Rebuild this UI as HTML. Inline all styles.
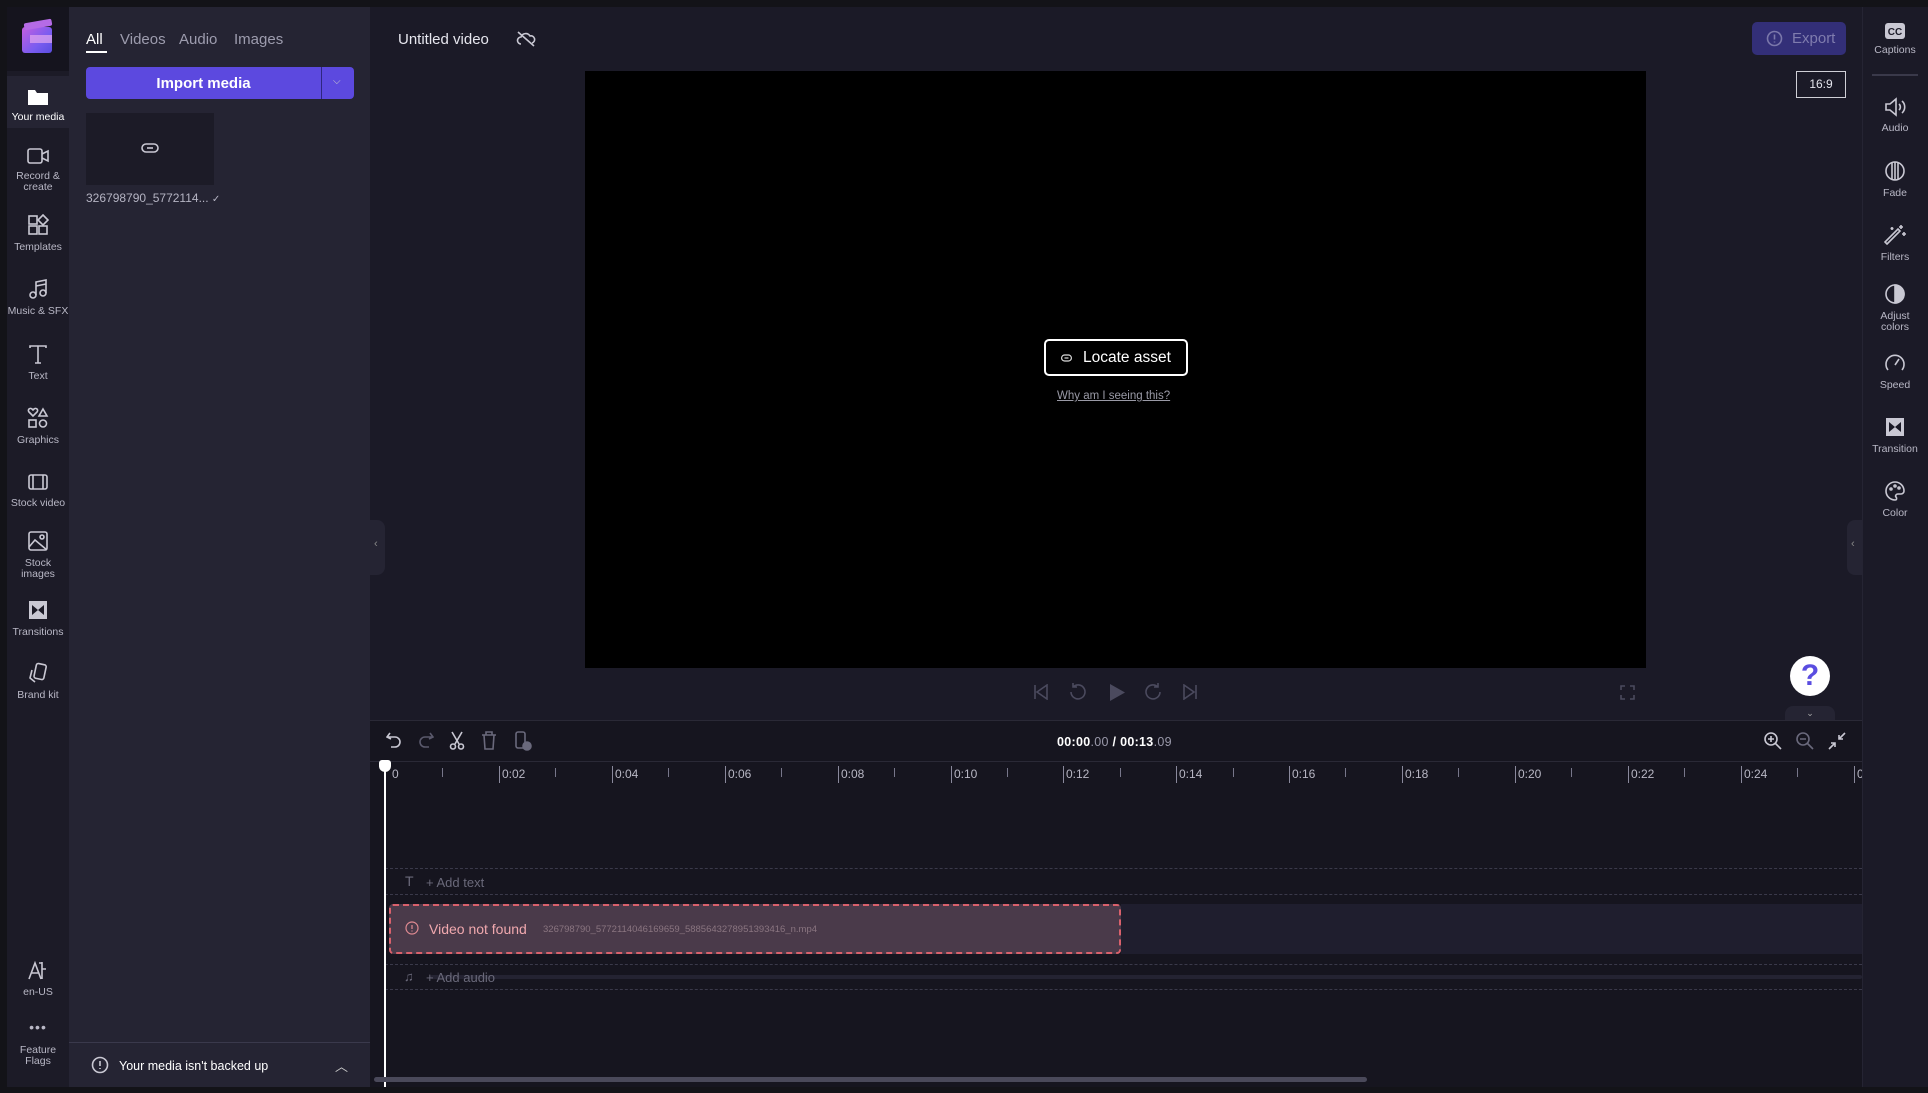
<!DOCTYPE html>
<html><head><meta charset="utf-8"><style>
*{margin:0;padding:0;box-sizing:border-box}
body{width:1928px;height:1093px;background:#131318;font-family:"Liberation Sans",sans-serif;position:relative;overflow:hidden;color:#e6e6ee}
.a{position:absolute}
.nav{position:absolute;left:7px;width:62px;text-align:center;font-size:10.5px;color:#b9b8c6;line-height:11px}
.nav svg{display:block;margin:0 auto 6px}
.rp{position:absolute;left:1862px;width:66px;text-align:center;font-size:10.5px;color:#b9b8c6;line-height:11px}
.rp svg{display:block;margin:0 auto 6px}
svg{fill:none;stroke:#c9c8d3;stroke-width:1.6}
.dim{stroke:#4b4a5e}
.dim2{stroke:#6a697c}
.tick{position:absolute;top:768px;width:1px;height:9px;background:#77768a}
.big{position:absolute;top:766px;width:1px;height:17px;background:#8a899c}
.lab{position:absolute;top:767px;font-size:12px;color:#b8b7c4}
</style></head><body>
<!-- nav -->
<div class="a" style="left:7px;top:7px;width:62px;height:1080px;background:#1c1b27"></div>
<div class="a" style="left:7px;top:7px;width:62px;height:64px;background:#15141e"></div>
<div class="a" style="left:20px;top:21px;width:34px;height:36px">
<div class="a" style="left:2px;top:6px;width:30px;height:26px;border-radius:3px;background:linear-gradient(135deg,#c55ee0,#7a5cf0 60%,#5a4de0)"></div>
<div class="a" style="left:4px;top:0px;width:28px;height:7px;border-radius:2px;background:#b56be6;transform:rotate(-10deg)"></div>
<div class="a" style="left:10px;top:14px;width:22px;height:8px;background:#e2a6f0;opacity:.7"></div>
</div>
<div class="a" style="left:7px;top:76px;width:62px;height:52px;background:#252433"></div>
<div class="nav" style="top:88px;color:#fff"><svg width="22" height="18" viewBox="0 0 22 18" style="stroke:none;fill:#fff"><path d="M1 2h7l2 3h11v12H1z"/></svg>Your media</div>
<div class="nav" style="top:147px"><svg width="24" height="18" viewBox="0 0 24 18"><rect x="2" y="2" width="14" height="14" rx="2"/><path d="M16 7l6-3v10l-6-3"/></svg>Record &amp;<br>create</div>
<div class="nav" style="top:214px"><svg width="22" height="22" viewBox="0 0 22 22"><rect x="2" y="12" width="8" height="8"/><rect x="12" y="12" width="8" height="8"/><rect x="2" y="2" width="8" height="8"/><path d="M16 1l5 5-5 5-5-5z"/></svg>Templates</div>
<div class="nav" style="top:278px"><svg width="22" height="22" viewBox="0 0 22 22"><circle cx="6" cy="17" r="3"/><circle cx="16" cy="15" r="3"/><path d="M9 17V4l10-2v13M9 8l10-2"/></svg>Music &amp; SFX</div>
<div class="nav" style="top:343px"><svg width="22" height="22" viewBox="0 0 22 22"><path d="M3 5V3h16v2M11 3v17M8 20h6"/></svg>Text</div>
<div class="nav" style="top:407px"><svg width="22" height="22" viewBox="0 0 22 22"><path d="M6 9L2 5a2 2 0 013-3l1 1 1-1a2 2 0 013 3z"/><path d="M16 2l4 7h-8z"/><rect x="2" y="13" width="7" height="7"/><circle cx="16" cy="16.5" r="3.5"/></svg>Graphics</div>
<div class="nav" style="top:472px"><svg width="22" height="20" viewBox="0 0 22 20"><rect x="2" y="3" width="18" height="14" rx="2"/><path d="M6 3v14M16 3v14"/></svg>Stock video</div>
<div class="nav" style="top:530px"><svg width="22" height="22" viewBox="0 0 22 22"><rect x="2" y="2" width="18" height="18" rx="2"/><path d="M2 17l6-7 12 10"/><circle cx="15" cy="7" r="2"/></svg>Stock<br>images</div>
<div class="nav" style="top:599px"><svg width="22" height="22" viewBox="0 0 22 22" style="stroke:none;fill:#c9c8d3"><path d="M2 2h18v18H2z"/><path d="M5 6l6 5-6 5zM17 6l-6 5 6 5z" fill="#1c1b27"/></svg>Transitions</div>
<div class="nav" style="top:662px"><svg width="22" height="22" viewBox="0 0 22 22"><rect x="8" y="2" width="10" height="15" rx="2" transform="rotate(12 13 10)"/><path d="M5 8l-2 8 5 4"/></svg>Brand kit</div>
<div class="nav" style="top:959px"><svg width="22" height="22" viewBox="0 0 22 22"><path d="M2 20L8 4l6 16M4 14h8M15 3v17M15 10h4M12 4h3"/></svg>en-US</div>
<div class="nav" style="top:1022px;font-size:14px;letter-spacing:1px;line-height:10px">•••</div>
<div class="nav" style="top:1045px">Feature<br>Flags</div>
<!-- media panel -->
<div class="a" style="left:69px;top:7px;width:301px;height:1080px;background:#252433"></div>
<div class="a" style="left:86px;top:31px;font-size:15px;color:#fff">All</div>
<div class="a" style="left:86px;top:51px;width:21px;height:2px;background:#fff"></div>
<div class="a" style="left:120px;top:31px;font-size:15px;color:#9d9cae">Videos</div>
<div class="a" style="left:179px;top:31px;font-size:15px;color:#9d9cae">Audio</div>
<div class="a" style="left:234px;top:31px;font-size:15px;color:#9d9cae">Images</div>
<div class="a" style="left:86px;top:67px;width:268px;height:32px;border-radius:4px;background:#5c49df"></div>
<div class="a" style="left:86px;top:68px;width:235px;height:32px;line-height:32px;text-align:center;font-size:15px;font-weight:bold;color:#fff">Import media</div>
<div class="a" style="left:321px;top:67px;width:1px;height:32px;background:#2e2680"></div>
<div class="a" style="left:333px;top:76px;font-size:10px;color:#ccc">⌵</div>
<div class="a" style="left:86px;top:113px;width:128px;height:72px;background:#1c1b27"></div>
<svg class="a" style="left:141px;top:142px" width="18" height="12" viewBox="0 0 18 12"><rect x="1" y="2" width="16" height="8" rx="4"/><path d="M6 6h6"/></svg>
<div class="a" style="left:86px;top:191px;font-size:12px;color:#b5b4c3">326798790_5772114... <span style="font-size:10px">✓</span></div>
<div class="a" style="left:69px;top:1042px;width:301px;height:1px;background:#3a394c"></div>
<svg class="a" style="left:91px;top:1056px" width="18" height="18" viewBox="0 0 18 18"><circle cx="9" cy="9" r="7.5"/><path d="M9 5v5M9 12v1"/></svg>
<div class="a" style="left:119px;top:1059px;font-size:12.5px;color:#fff">Your media isn't backed up</div>
<div class="a" style="left:335px;top:1056px;font-size:13px;color:#ccc">︿</div>
<!-- main -->
<div class="a" style="left:370px;top:7px;width:1492px;height:713px;background:#1b1a27"></div>
<div class="a" style="left:398px;top:31px;font-size:15px;color:#e6e6ee">Untitled video</div>
<svg class="a" style="left:516px;top:31px" width="20" height="16" viewBox="0 0 20 16"><path d="M5 13a3.5 3.5 0 010-7 5 5 0 019-1 3.5 3.5 0 012 7M2 1l16 14"/></svg>
<div class="a" style="left:1752px;top:22px;width:94px;height:33px;border-radius:5px;background:#332f78"></div>
<svg class="a" style="left:1766px;top:30px;stroke:#7a77aa" width="17" height="17" viewBox="0 0 17 17"><circle cx="8.5" cy="8.5" r="7"/><path d="M8.5 4.5v5M8.5 11.5v1"/></svg>
<div class="a" style="left:1792px;top:30px;font-size:15px;color:#7f7cae">Export</div>
<div class="a" style="left:1796px;top:71px;width:50px;height:27px;border:1px solid #cfcfd6;font-size:12px;line-height:25px;text-align:center;color:#e6e6ee">16:9</div>
<div class="a" style="left:585px;top:71px;width:1061px;height:597px;background:#000"></div>
<div class="a" style="left:1044px;top:339px;width:144px;height:37px;border:2px solid #fff;border-radius:5px;background:#000"></div>
<svg class="a" style="left:1061px;top:354px;stroke:#ddd;stroke-width:1.2" width="11" height="8" viewBox="0 0 11 8"><rect x=".6" y="1" width="9.8" height="6" rx="3"/><path d="M3.5 4h4"/></svg>
<div class="a" style="left:1083px;top:349px;font-size:15.5px;color:#fff">Locate asset</div>
<div class="a" style="left:1057px;top:390px;font-size:11.5px;color:#9a9aa6;text-decoration:underline">Why am I seeing this?</div>
<!-- playback -->
<svg class="a dim" style="left:1033px;top:684px" width="16" height="16" viewBox="0 0 16 16"><path d="M2 1v14M14 1L4 8l10 7z"/></svg>
<svg class="a dim" style="left:1068px;top:682px" width="20" height="20" viewBox="0 0 20 20"><path d="M5 5a7 7 0 11-2 5M5 1v4h4"/></svg>
<svg class="a" style="left:1108px;top:683px;stroke:none;fill:#4b4a5e" width="18" height="19" viewBox="0 0 18 19"><path d="M2 1l15 8.5L2 18z"/></svg>
<svg class="a dim" style="left:1143px;top:682px" width="20" height="20" viewBox="0 0 20 20"><path d="M15 5a7 7 0 102 5M15 1v4h-4"/></svg>
<svg class="a dim" style="left:1182px;top:684px" width="16" height="16" viewBox="0 0 16 16"><path d="M14 1v14M2 1l10 7-10 7z"/></svg>
<svg class="a dim" style="left:1620px;top:685px" width="15" height="15" viewBox="0 0 15 15"><path d="M1 5V1h4M10 1h4v4M14 10v4h-4M5 14H1v-4"/></svg>
<div class="a" style="left:1790px;top:656px;width:40px;height:40px;border-radius:50%;background:#fff;text-align:center;font-size:30px;font-weight:bold;line-height:40px;color:#5a4de0">?</div>
<div class="a" style="left:1785px;top:706px;width:50px;height:14px;border-radius:8px 8px 0 0;background:#252433;text-align:center;font-size:9px;color:#aaa;line-height:14px">⌄</div>
<div class="a" style="left:370px;top:520px;width:15px;height:55px;border-radius:0 8px 8px 0;background:#252433"></div>
<div class="a" style="left:374px;top:538px;font-size:11px;color:#888">‹</div>
<div class="a" style="left:1847px;top:520px;width:15px;height:55px;border-radius:8px 0 0 8px;background:#252433"></div>
<div class="a" style="left:1851px;top:538px;font-size:11px;color:#888">‹</div>
<!-- timeline -->
<div class="a" style="left:370px;top:720px;width:1492px;height:367px;background:#16151f"></div>
<div class="a" style="left:370px;top:720px;width:1492px;height:1px;background:#2a2936"></div>
<div class="a" style="left:370px;top:761px;width:1492px;height:1px;background:#2a2936"></div>
<svg class="a" style="left:386px;top:732px" width="16" height="17" viewBox="0 0 16 17"><path d="M4 1L1 5l4 2M1 5h8a5 5 0 010 10H5"/></svg>
<svg class="a" style="left:418px;top:732px;stroke:#5a596c" width="16" height="17" viewBox="0 0 16 17"><path d="M12 1l3 4-4 2M15 5H7a5 5 0 000 10h4"/></svg>
<svg class="a" style="left:449px;top:731px" width="16" height="19" viewBox="0 0 16 19"><path d="M3 1l7 12M13 1L6 13"/><circle cx="4" cy="15.5" r="2.5"/><circle cx="12" cy="15.5" r="2.5"/></svg>
<svg class="a dim2" style="left:481px;top:731px" width="16" height="19" viewBox="0 0 16 19"><path d="M1 4h14M5 4V1h6v3M3 4l1 14h8l1-14"/></svg>
<svg class="a dim2" style="left:514px;top:731px" width="18" height="20" viewBox="0 0 18 20"><rect x="2" y="1" width="9" height="16" rx="2"/><circle cx="13" cy="15" r="4" fill="#6a697c"/></svg>
<div class="a" style="left:1057px;top:735px;font-size:12.5px;font-weight:bold;color:#fff;letter-spacing:.3px">00:00<span style="color:#9a99aa;font-weight:normal">.00</span> / 00:13<span style="color:#9a99aa;font-weight:normal">.09</span></div>
<svg class="a" style="left:1764px;top:732px" width="18" height="18" viewBox="0 0 18 18"><circle cx="7" cy="7" r="6"/><path d="M11 11l6 6M4 7h6M7 4v6"/></svg>
<svg class="a dim2" style="left:1796px;top:732px" width="18" height="18" viewBox="0 0 18 18"><circle cx="7" cy="7" r="6"/><path d="M11 11l6 6M4 7h6"/></svg>
<svg class="a" style="left:1828px;top:732px" width="18" height="18" viewBox="0 0 18 18"><path d="M1 17l6-6M3 11h4v4M17 1l-6 6M11 3v4h4"/></svg>
<!-- ruler -->
<div class="lab" style="left:392px">0</div>
<div class="tick" style="left:442px"></div>
<div class="big" style="left:499px"></div><div class="lab" style="left:502px">0:02</div><div class="tick" style="left:555px"></div>
<div class="big" style="left:612px"></div><div class="lab" style="left:615px">0:04</div><div class="tick" style="left:668px"></div>
<div class="big" style="left:725px"></div><div class="lab" style="left:728px">0:06</div><div class="tick" style="left:781px"></div>
<div class="big" style="left:838px"></div><div class="lab" style="left:841px">0:08</div><div class="tick" style="left:894px"></div>
<div class="big" style="left:951px"></div><div class="lab" style="left:954px">0:10</div><div class="tick" style="left:1007px"></div>
<div class="big" style="left:1063px"></div><div class="lab" style="left:1066px">0:12</div><div class="tick" style="left:1120px"></div>
<div class="big" style="left:1176px"></div><div class="lab" style="left:1179px">0:14</div><div class="tick" style="left:1233px"></div>
<div class="big" style="left:1289px"></div><div class="lab" style="left:1292px">0:16</div><div class="tick" style="left:1345px"></div>
<div class="big" style="left:1402px"></div><div class="lab" style="left:1405px">0:18</div><div class="tick" style="left:1458px"></div>
<div class="big" style="left:1515px"></div><div class="lab" style="left:1518px">0:20</div><div class="tick" style="left:1571px"></div>
<div class="big" style="left:1628px"></div><div class="lab" style="left:1631px">0:22</div><div class="tick" style="left:1684px"></div>
<div class="big" style="left:1741px"></div><div class="lab" style="left:1744px">0:24</div><div class="tick" style="left:1797px"></div>
<div class="big" style="left:1854px"></div><div class="lab" style="left:1857px">0</div>
<!-- tracks -->
<div class="a" style="left:385px;top:868px;width:1477px;height:0;border-top:1px dashed #3a394a"></div>
<div class="a" style="left:385px;top:894px;width:1477px;height:0;border-top:1px dashed #3a394a"></div>
<div class="a" style="left:405px;top:873px;font-size:14px;color:#6a697a">T</div>
<div class="a" style="left:426px;top:875px;font-size:13px;color:#6a697a">+ Add text</div>
<div class="a" style="left:1121px;top:904px;width:741px;height:50px;background:#1f1e2e"></div>
<div class="a" style="left:389px;top:904px;width:732px;height:50px;border:2px dashed #d9616c;border-radius:4px;background:#4a3a4a"></div>
<svg class="a" style="left:405px;top:921px;stroke:#e08a92;stroke-width:1.2" width="14" height="14" viewBox="0 0 14 14"><circle cx="7" cy="7" r="6"/><path d="M7 4v4M7 9.5v1"/></svg>
<div class="a" style="left:429px;top:921px;font-size:14px;color:#f0a8ae">Video not found</div>
<div class="a" style="left:543px;top:924px;font-size:9.5px;color:#8a7580">326798790_5772114046169659_5885643278951393416_n.mp4</div>
<div class="a" style="left:385px;top:964px;width:1477px;height:0;border-top:1px dashed #3a394a"></div>
<div class="a" style="left:385px;top:989px;width:1477px;height:0;border-top:1px dashed #3a394a"></div>
<div class="a" style="left:430px;top:975px;width:1432px;height:4px;background:#242332;border-radius:2px"></div>
<div class="a" style="left:404px;top:969px;font-size:13px;color:#6a697a">♫</div>
<div class="a" style="left:426px;top:970px;font-size:13px;color:#6a697a">+ Add audio</div>
<div class="a" style="left:384px;top:768px;width:2px;height:319px;background:#fff"></div>
<div class="a" style="left:379px;top:760px;width:12px;height:12px;border-radius:3px 3px 6px 6px;background:#fff"></div>
<div class="a" style="left:374px;top:1077px;width:993px;height:5px;border-radius:3px;background:#4a495a"></div>
<!-- right panel -->
<div class="a" style="left:1862px;top:7px;width:66px;height:1080px;background:#1b1a27;border-left:1px solid #252433"></div>
<div class="rp" style="top:23px"><svg width="20" height="16" viewBox="0 0 20 16" style="stroke:none;fill:#c9c8d3"><rect width="20" height="16" rx="3"/><text x="10" y="12" font-size="10" font-weight="bold" text-anchor="middle" fill="#1b1a27" font-family="Liberation Sans">CC</text></svg>Captions</div>
<div class="a" style="left:1872px;top:74px;width:46px;height:2px;background:#3a394a"></div>
<div class="rp" style="top:97px"><svg width="22" height="20" viewBox="0 0 22 20"><path d="M2 7h4l6-5v16l-6-5H2z"/><path d="M15 7a4 4 0 010 6M18 4a8 8 0 010 12"/></svg>Audio</div>
<div class="rp" style="top:160px"><svg width="22" height="22" viewBox="0 0 22 22"><circle cx="11" cy="11" r="9"/><path d="M8 2.5v17M11 2v18M14 2.5v17"/></svg>Fade</div>
<div class="rp" style="top:224px"><svg width="22" height="22" viewBox="0 0 22 22"><path d="M3 20L16 7l-2-2L1 18zM17 1v4M15 3h4M20 8v4M18 10h4M8 3v3M6.5 4.5h3"/></svg>Filters</div>
<div class="rp" style="top:283px"><svg width="22" height="22" viewBox="0 0 22 22"><circle cx="11" cy="11" r="9"/><path d="M11 2a9 9 0 010 18z" fill="#c9c8d3"/></svg>Adjust<br>colors</div>
<div class="rp" style="top:352px"><svg width="22" height="22" viewBox="0 0 22 22"><path d="M4 18a9 9 0 1114 0"/><path d="M11 13l4-6"/></svg>Speed</div>
<div class="rp" style="top:416px"><svg width="22" height="22" viewBox="0 0 22 22" style="stroke:none;fill:#c9c8d3"><path d="M2 2h18v18H2z"/><path d="M5 6l6 5-6 5zM17 6l-6 5 6 5z" fill="#1b1a27"/></svg>Transition</div>
<div class="rp" style="top:480px"><svg width="22" height="22" viewBox="0 0 22 22"><path d="M11 2a9 9 0 100 18c2 0 2-2 1-3s0-3 2-3h3a3 3 0 003-3c0-5-4-9-9-9z"/><circle cx="7" cy="9" r="1"/><circle cx="11" cy="6" r="1"/><circle cx="15" cy="8" r="1"/></svg>Color</div>
</body></html>
